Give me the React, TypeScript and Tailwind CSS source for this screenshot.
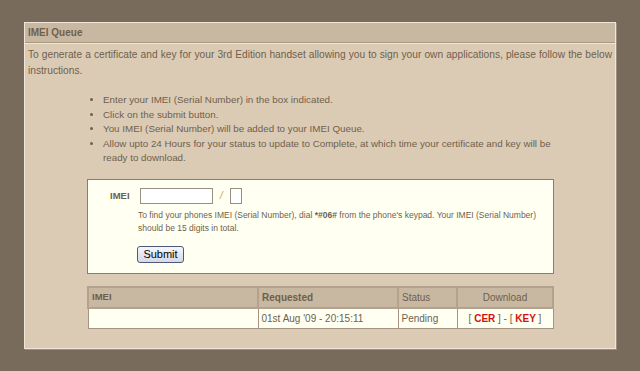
import type { FC } from 'react'

// ── Instructions ────────────────────────────────────────────────

const steps = [
  'Enter your IMEI (Serial Number) in the box indicated.',
  'Click on the submit button.',
  'You IMEI (Serial Number) will be added to your IMEI Queue.',
  'Allow upto 24 Hours for your status to update to Complete, at which time your certificate and key will be ready to download.',
]

// ── Form ────────────────────────────────────────────────────────

const ImeiForm: FC = () => (
  <div className="ml-[62px] mt-[13px] h-[95px] w-[467px] border border-[#8c7d6a] bg-[#fffff2] pt-[8px]">
    <div className="flex items-center">
      <span className="ml-[22px] w-[30px] text-[9.5px] font-bold text-[#6f5f4d]">IMEI</span>
      <input
        className="h-[16px] w-[73px] border border-[#9a8f80] bg-white outline-none"
        type="text"
      />
      <span className="mx-[7px] text-[10px] italic text-[#c89a50]">/</span>
      <input
        className="h-[16px] w-[12px] border border-[#9a8f80] bg-white outline-none"
        type="text"
      />
    </div>
    <p className="ml-[50px] mt-[5px] w-[410px] text-[8.5px] leading-[13px] text-[#6f5f4d]">
      To find your phones IMEI (Serial Number), dial <b>*#06#</b> from the phone's keypad. Your IMEI (Serial Number) should be 15 digits in total.
    </p>
    <button className="ml-[49px] mt-[11px] h-[17px] w-[47px] rounded-[3px] border border-[#4a5a78] bg-gradient-to-b from-[#f6f6fb] to-[#d8d8e6] text-[11px] leading-none text-black">
      Submit
    </button>
  </div>
)

// ── Queue table ─────────────────────────────────────────────────

const QueueTable: FC = () => (
  <table className="ml-[62px] mt-[12px] w-[467px] border-collapse border border-[#a39380] text-[10px] text-[#6f5f4d]">
    <thead>
      <tr className="h-[21px] bg-[#c8b8a2]">
        <th className="w-[170px] border-2 border-[#b3a38e] px-[3px] text-left text-[9.5px] font-bold">IMEI</th>
        <th className="w-[140px] border-2 border-[#b3a38e] px-[3px] text-left font-bold">Requested</th>
        <th className="w-[59px] border-2 border-[#b3a38e] px-[3px] text-left font-normal">Status</th>
        <th className="border-2 border-[#b3a38e] px-[3px] text-center font-normal">Download</th>
      </tr>
    </thead>
    <tbody>
      <tr className="h-[21px] bg-[#fffff2]">
        <td className="border border-[#a39380] px-[3px]"></td>
        <td className="border border-[#a39380] px-[3px]">01st Aug '09 - 20:15:11</td>
        <td className="border border-[#a39380] px-[3px]">Pending</td>
        <td className="border border-[#a39380] px-[3px] text-center text-[#6f5f4d]">
          [ <span className="font-bold text-[#d41010]">CER</span> ] - [ <span className="font-bold text-[#d41010]">KEY</span> ]
        </td>
      </tr>
    </tbody>
  </table>
)

// ── Page ────────────────────────────────────────────────────────

export default function App() {
  return (
    <div
      className="h-[371px] w-[640px] overflow-hidden bg-[#786b5b] pl-[24px] pt-[22px]"
      style={{ fontFamily: 'Arial, "Liberation Sans", sans-serif' }}
    >
      <div className="h-[327px] w-[592px] border border-[#efe6d8] bg-[#dccbb4] shadow-[1px_1px_0_#9a8f84]">
        {/* Header */}
        <div className="flex h-[19px] items-center bg-[#c8b8a2] pl-[3px] text-[10px] font-bold text-[#6f5f4d]">
          IMEI Queue
        </div>
        <div className="h-[1px] bg-[#a8997f]" />
        <div className="h-[1px] bg-[#efe6d8]" />

        {/* Intro */}
        <p className="mt-[3px] px-[3px] text-justify text-[10.2px] leading-[16px] text-[#6f5f4d]">
          To generate a certificate and key for your 3rd Edition handset allowing you to sign your own applications, please follow the below instructions.
        </p>

        {/* Steps */}
        <ul className="ml-[66px] mt-[14px] w-[480px] list-disc pl-[12px] text-[9.8px] leading-[14.6px] text-[#6f5f4d] marker:text-[#6f5f4d]">
          {steps.map((s) => (
            <li key={s}>{s}</li>
          ))}
        </ul>

        <ImeiForm />
        <QueueTable />
      </div>
    </div>
  )
}
